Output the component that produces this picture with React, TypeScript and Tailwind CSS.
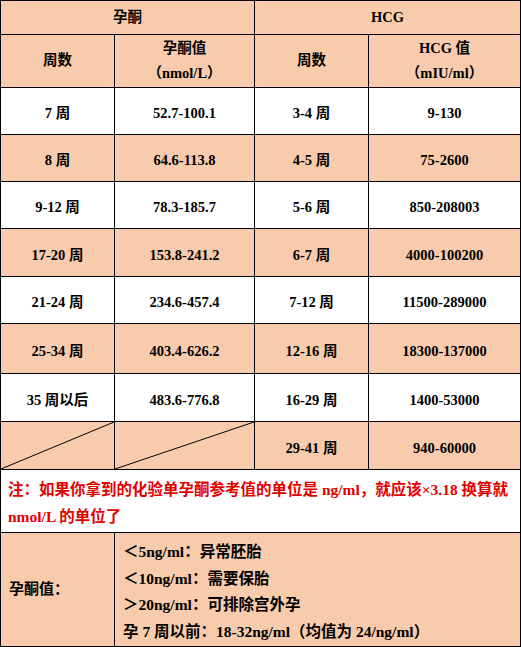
import React from 'react'

const peach = 'bg-[#f8cbad]'
const white = 'bg-white'

const rows: [string, string, string, string][] = [
	['7 周', '52.7-100.1', '3-4 周', '9-130'],
	['8 周', '64.6-113.8', '4-5 周', '75-2600'],
	['9-12 周', '78.3-185.7', '5-6 周', '850-208003'],
	['17-20 周', '153.8-241.2', '6-7 周', '4000-100200'],
	['21-24 周', '234.6-457.4', '7-12 周', '11500-289000'],
	['25-34 周', '403.4-626.2', '12-16 周', '18300-137000'],
	['35 周以后', '483.6-776.8', '16-29 周', '1400-53000'],
]

function Cell({ bg, children, className = '' }: { bg: string; children?: React.ReactNode; className?: string }) {
	return <div className={`${bg} flex items-center justify-center text-center ${className}`}>{children}</div>
}

function Slash({ bg }: { bg: string }) {
	return (
		<div className={`${bg} relative`}>
			<svg className="absolute inset-0 w-full h-full" viewBox="0 0 100 100" preserveAspectRatio="none">
				<line x1="0" y1="100" x2="100" y2="0" stroke="#000" strokeWidth="1" vectorEffect="non-scaling-stroke" />
			</svg>
		</div>
	)
}

export default function App() {
	return (
		<div
			className="w-[521px] h-[647px] bg-black p-px grid gap-px grid-cols-[113px_139px_113px_151px] grid-rows-[33px_52px_46px_46px_46px_47px_46px_49px_47px_47px_62px_113px] text-[14.5px] font-bold text-black"
			style={{ fontFamily: '"Liberation Serif", "Noto Sans CJK SC", serif' }}
		>
			<Cell bg={peach} className="col-span-2">孕酮</Cell>
			<Cell bg={peach} className="col-span-2">HCG</Cell>

			<Cell bg={peach}>周数</Cell>
			<Cell bg={peach} className="flex-col leading-[25px]">
				<span>孕酮值</span>
				<span>（nmol/L）</span>
			</Cell>
			<Cell bg={peach}>周数</Cell>
			<Cell bg={peach} className="flex-col leading-[25px]">
				<span>HCG 值</span>
				<span>（mIU/ml）</span>
			</Cell>

			{rows.map((r, i) => {
				const bg = i % 2 === 0 ? white : peach
				return (
					<React.Fragment key={i}>
						<Cell bg={bg} className="pt-[6px]">{r[0]}</Cell>
						<Cell bg={bg} className="pt-[6px]">{r[1]}</Cell>
						<Cell bg={bg} className="pt-[6px]">{r[2]}</Cell>
						<Cell bg={bg} className="pt-[6px]">{r[3]}</Cell>
					</React.Fragment>
				)
			})}

			<Slash bg={peach} />
			<Slash bg={peach} />
			<Cell bg={peach} className="pt-[6px]">29-41 周</Cell>
			<Cell bg={peach} className="pt-[6px]">940-60000</Cell>

			<div className={`${white} col-span-4 px-[7px] pt-[6px] text-[15.5px] leading-[27px] text-[#e00000]`}>
				注：如果你拿到的化验单孕酮参考值的单位是 ng/ml，就应该×3.18 换算就 nmol/L 的单位了
			</div>

			<div className={`${peach} flex items-center pl-[8px] text-[15px]`}>孕酮值：</div>
			<div className={`${peach} col-span-3 pl-[8px] pt-[6px] leading-[26.5px] text-[15.5px]`}>
				<div>＜5ng/ml：异常胚胎</div>
				<div>＜10ng/ml：需要保胎</div>
				<div>＞20ng/ml：可排除宫外孕</div>
				<div>孕 7 周以前：18-32ng/ml（均值为 24/ng/ml）</div>
			</div>
		</div>
	)
}
